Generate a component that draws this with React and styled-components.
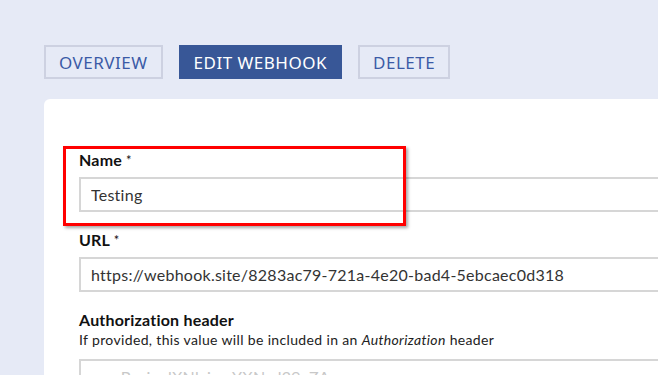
import React from 'react';
import styled, { createGlobalStyle } from 'styled-components';

const GlobalStyle = createGlobalStyle`
    html, body {
        margin: 0;
        padding: 0;
        background: #e6eaf6;
        overflow: hidden;
    }
`;

export default function App() {
    return (
        <>
            <GlobalStyle />
            <Page>
                <Tabs>
                    <Tab>Overview</Tab>
                    <Tab active>Edit webhook</Tab>
                    <Tab>Delete</Tab>
                </Tabs>

                <Card>
                    <Field>
                        <Highlight />
                        <Label>Name <Req>*</Req></Label>
                        <Input defaultValue='Testing' />
                    </Field>

                    <Field>
                        <Label>URL <Req>*</Req></Label>
                        <Input defaultValue='https://webhook.site/8283ac79-721a-4e20-bad4-5ebcaec0d318' />
                    </Field>

                    <Field>
                        <Label>Authorization header</Label>
                        <Help>
                            If provided, this value will be included in an <em>Authorization</em> header
                        </Help>
                        <Input placeholder='e.g. Basic dXNlcjpwYXNzd29yZA==' />
                    </Field>
                </Card>
            </Page>
        </>
    );
}

const Page = styled.div`
    padding: 45px 0 0 44px;
    height: 375px;
    box-sizing: border-box;
    overflow: hidden;
    font-family: Lato, "Open Sans", sans-serif;
`;

const Tabs = styled.div`
    display: flex;
    gap: 16px;
`;

const Tab = styled.button`
    height: 34px;
    padding: 0 13px;
    box-sizing: border-box;
    border: 2px solid ${p => (p.active ? '#385797' : '#cdd1e1')};
    background: ${p => (p.active ? '#385797' : 'transparent')};
    color: ${p => (p.active ? '#ffffff' : '#3b5aa6')};
    font-family: "Noto Sans", sans-serif;
    font-size: 17px;
    text-transform: uppercase;
    letter-spacing: 0.5px;
    cursor: pointer;
`;

const Card = styled.div`
    margin-top: 20px;
    width: 700px;
    height: 400px;
    background: #ffffff;
    border-radius: 6px 0 0 0;
    padding: 51px 0 0 35px;
    box-sizing: border-box;
    display: flex;
    flex-direction: column;
    gap: 18px;
`;

const Field = styled.div`
    position: relative;
    display: flex;
    flex-direction: column;
`;

const Highlight = styled.div`
    position: absolute;
    left: -16px;
    top: -4px;
    width: 343px;
    height: 80px;
    box-sizing: border-box;
    border: 3px solid #ff0000;
    box-shadow: 2px 2px 3px rgba(0, 0, 0, 0.35);
    pointer-events: none;
    z-index: 2;
`;

const Label = styled.label`
    font-size: 16px;
    line-height: 20px;
    font-weight: 700;
    color: #111111;
    margin-bottom: 7px;
    letter-spacing: 0.2px;
`;

const Req = styled.span`
    font-weight: 400;
    font-size: 13px;
    vertical-align: top;
`;

const Help = styled.div`
    font-size: 14px;
    line-height: 18px;
    letter-spacing: 0.35px;
    color: #222222;
    margin: -6px 0 10px;

    > em {
        font-style: italic;
    }
`;

const Input = styled.input`
    height: 35px;
    width: 100%;
    box-sizing: border-box;
    border: 2px solid #d6d6d6;
    padding: 0 10px;
    font-family: Lato, "Open Sans", sans-serif;
    font-size: 16px;
    letter-spacing: 0.25px;
    color: #333333;
    outline: none;

    &::placeholder {
        color: #c8c8c8;
    }
`;
